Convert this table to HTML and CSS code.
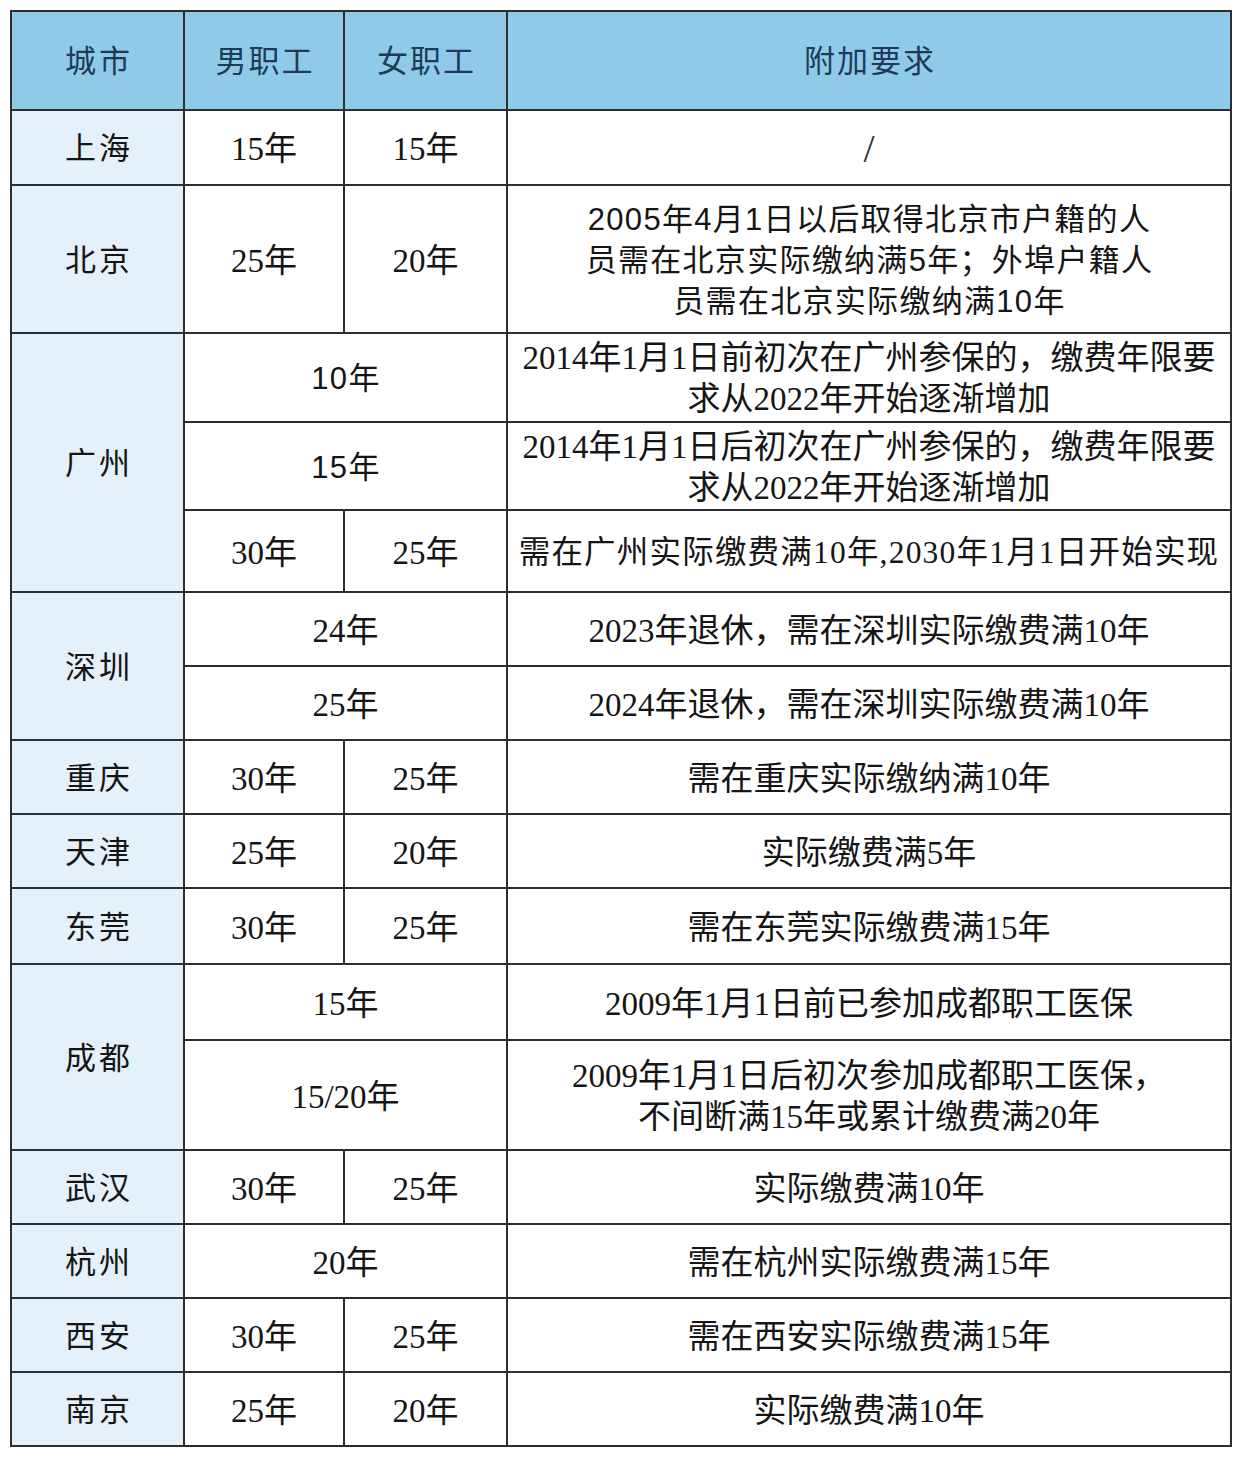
FILE: index.html
```html
<!DOCTYPE html>
<html lang="zh-CN">
<head>
<meta charset="utf-8">
<title>各城市医保缴费年限</title>
<link rel="stylesheet" href="styles.css">
</head>
<body>
<table class="grid">
  <colgroup>
    <col class="c-city">
    <col class="c-male">
    <col class="c-female">
    <col class="c-extra">
  </colgroup>
  <thead>
    <tr class="h-head">
      <th class="city">城市</th>
      <th>男职工</th>
      <th>女职工</th>
      <th>附加要求</th>
    </tr>
  </thead>
  <tbody>
    <tr class="h75">
      <td class="city">上海</td><td>15年</td><td>15年</td><td class="slash">/</td>
    </tr>
    <tr class="h148">
      <td class="city">北京</td><td>25年</td><td>20年</td>
      <td class="sans multi">2005年4月1日以后取得北京市户籍的人<br>员需在北京实际缴纳满5年；外埠户籍人<br>员需在北京实际缴纳满10年</td>
    </tr>
    <tr class="h89">
      <td class="city" rowspan="3">广州</td>
      <td colspan="2" class="sans">10年</td>
      <td class="multi">2014年1月1日前初次在广州参保的，缴费年限要<br>求从2022年开始逐渐增加</td>
    </tr>
    <tr class="h88">
      <td colspan="2" class="sans">15年</td>
      <td class="multi">2014年1月1日后初次在广州参保的，缴费年限要<br>求从2022年开始逐渐增加</td>
    </tr>
    <tr class="h82">
      <td>30年</td><td>25年</td>
      <td class="nowrap">需在广州实际缴费满10年,2030年1月1日开始实现</td>
    </tr>
    <tr class="h74">
      <td class="city" rowspan="2">深圳</td>
      <td colspan="2">24年</td>
      <td>2023年退休，需在深圳实际缴费满10年</td>
    </tr>
    <tr class="h74">
      <td colspan="2">25年</td>
      <td>2024年退休，需在深圳实际缴费满10年</td>
    </tr>
    <tr class="h74">
      <td class="city">重庆</td><td>30年</td><td>25年</td><td>需在重庆实际缴纳满10年</td>
    </tr>
    <tr class="h74">
      <td class="city">天津</td><td>25年</td><td>20年</td><td>实际缴费满5年</td>
    </tr>
    <tr class="h76">
      <td class="city">东莞</td><td>30年</td><td>25年</td><td>需在东莞实际缴费满15年</td>
    </tr>
    <tr class="h76">
      <td class="city" rowspan="2">成都</td>
      <td colspan="2">15年</td>
      <td>2009年1月1日前已参加成都职工医保</td>
    </tr>
    <tr class="h110">
      <td colspan="2">15/20年</td>
      <td class="multi">2009年1月1日后初次参加成都职工医保，<br>不间断满15年或累计缴费满20年</td>
    </tr>
    <tr class="h74">
      <td class="city">武汉</td><td>30年</td><td>25年</td><td>实际缴费满10年</td>
    </tr>
    <tr class="h74">
      <td class="city">杭州</td><td colspan="2">20年</td><td>需在杭州实际缴费满15年</td>
    </tr>
    <tr class="h74">
      <td class="city">西安</td><td>30年</td><td>25年</td><td>需在西安实际缴费满15年</td>
    </tr>
    <tr class="h74">
      <td class="city">南京</td><td>25年</td><td>20年</td><td>实际缴费满10年</td>
    </tr>
  </tbody>
</table>
</body>
</html>
```

FILE: styles.css
```css
html, body {
  margin: 0;
  padding: 0;
  background: #ffffff;
}

body {
  padding: 10px 0 0 10px;
}

.grid {
  border-collapse: collapse;
  table-layout: fixed;
  width: 1222px;
  border: 2px solid #2a2a2a;
  font-family: "Liberation Serif", "Noto Sans CJK SC", serif;
  font-size: 33px;
  color: #151515;
}

.c-city { width: 173px; }
.c-male { width: 160px; }
.c-female { width: 163px; }

.grid th,
.grid td {
  border: 2px solid #2e2e2e;
  text-align: center;
  vertical-align: middle;
  padding: 3px 0 0 0;
  font-weight: normal;
  line-height: 42px;
  letter-spacing: 0;
}

.grid td.multi {
  line-height: 41px;
}

.grid th {
  background: #8fcbe9;
  color: #1d3b58;
  font-size: 31px;
  letter-spacing: 2px;
  padding-left: 2px;
}

.grid td.city,
.grid th.city {
  font-size: 31px;
  letter-spacing: 3px;
  padding-left: 3px;
}

.grid td.city {
  background: #e4f0fa;
}

.grid td.sans {
  font-family: "Liberation Sans", "Noto Sans CJK SC", sans-serif;
  font-size: 31px;
  letter-spacing: 1.3px;
  padding-left: 1px;
}

.grid td.nowrap {
  white-space: nowrap;
  font-size: 31.5px;
  letter-spacing: 1.2px;
}

.grid td.slash {
  font-size: 40px;
  line-height: 42px;
  font-weight: 300;
  color: #333333;
}

.h-head { height: 99px; }
.h75 { height: 75px; }
.h148 { height: 148px; }
.h89 { height: 89px; }
.h88 { height: 88px; }
.h82 { height: 82px; }
.h74 { height: 74px; }
.h76 { height: 76px; }
.h110 { height: 110px; }
```
